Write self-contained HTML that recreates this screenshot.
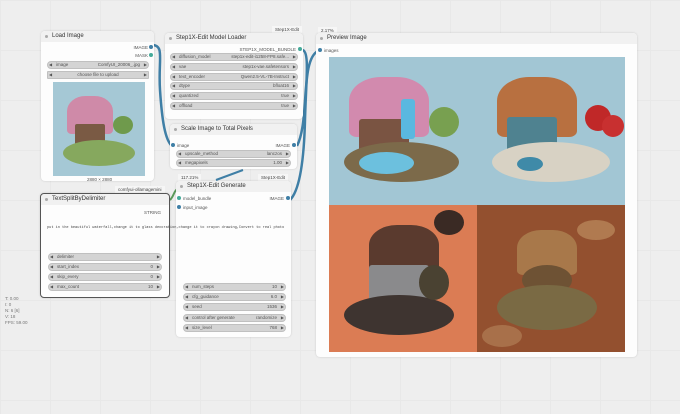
<!DOCTYPE html>
<html><head><meta charset="utf-8"><style>
*{margin:0;padding:0;box-sizing:border-box}
body{width:680px;height:414px;overflow:hidden;background:#eeeeee;font-family:"Liberation Sans",sans-serif;position:relative;
background-image:linear-gradient(#e8e8e8 1px,transparent 1px),linear-gradient(90deg,#e8e8e8 1px,transparent 1px);background-size:50px 50px}
.n{position:absolute;background:#fdfdfd;border-radius:4px;box-shadow:0 0 2px rgba(0,0,0,.15)}
.t{height:11px;background:#f1f1f1;border-radius:4px 4px 0 0;font-size:6px;line-height:11px;padding-left:11px;color:#333;position:relative}
.t:before{content:"";position:absolute;left:4px;top:4px;width:3px;height:3px;border-radius:50%;background:#aaa}
.w{position:absolute;height:8px;background:#d4d4d4;border:1px solid #c0c0c0;border-radius:4px;font-size:4.5px;line-height:6px;color:#555;padding:0 8px 0 8px;display:flex;justify-content:space-between}
.w:before{content:"◀";position:absolute;left:1px;font-size:4px}
.w:after{content:"▶";position:absolute;right:1px;font-size:4px}
.s{position:absolute;font-size:4.5px;color:#555}
.d{position:absolute;width:4px;height:4px;border-radius:50%}
.lb{position:absolute;font-size:4.5px;color:#444;background:#f6f6f6;padding:1px 3px}
.img{position:absolute;overflow:hidden}
.img i{position:absolute;border-radius:50%}
</style></head><body>
<svg style="position:absolute;left:0;top:0" width="680" height="414">
<path d="M152 45 C165 45,158 60,160 90 S165 140,172 146" stroke="#3f7fa6" stroke-width="2.5" fill="none"/>
<path d="M302 50 C310 50,306 80,305 120 S300 190,290 200" stroke="#3f7fa6" stroke-width="2.5" fill="none"/>
<path d="M297 146 C310 120,300 60,318 51" stroke="#3f7fa6" stroke-width="2.5" fill="none"/>
<path d="M170 200 C175 195,173 190,180 188" stroke="#5a9a5a" stroke-width="2" fill="none"/>
<path d="M216 180 L243 170" stroke="#3f7fa6" stroke-width="2" fill="none"/>
</svg>
<div class="lb" style="left:272px;top:26px">Step1X-Edit</div>
<div class="lb" style="left:318px;top:27px">2.17%</div>
<div class="lb" style="left:115px;top:186px">comfyui-ollamagemini</div>
<div class="lb" style="left:178px;top:174px">117.21%</div>
<div class="lb" style="left:258px;top:174px">Step1X-Edit</div>

<div class="n" style="left:41px;top:31px;width:113px;height:150px">
<div class="t">Load Image</div>
<div class="s" style="right:6px;top:14px">IMAGE</div><div class="d" style="right:1px;top:14px;background:#3f7fa6"></div>
<div class="s" style="right:6px;top:22px">MASK</div><div class="d" style="right:1px;top:22px;background:#4a9"></div>
<div class="w" style="left:6px;top:30px;width:102px"><span>image</span><span>ComfyUI_20006_.jpg</span></div>
<div class="w" style="left:6px;top:40px;width:102px;justify-content:center;border-radius:1px">choose file to upload</div>
<div class="img" style="left:12px;top:51px;width:92px;height:94px;background:#a5c8d5">
<i style="left:14px;top:14px;width:46px;height:38px;border-radius:40% 40% 10% 10%;background:#cf8aa8"></i>
<i style="left:22px;top:42px;width:30px;height:22px;border-radius:2px;background:#7a5a44"></i>
<i style="left:10px;top:58px;width:72px;height:26px;background:#86a85e"></i>
<i style="left:60px;top:34px;width:20px;height:18px;background:#6f9a4c"></i>
</div>
<div class="s" style="left:46px;top:146px">2880 × 2880</div>
</div>

<div class="n" style="left:165px;top:33px;width:138px;height:86px">
<div class="t">Step1X-Edit Model Loader</div>
<div class="s" style="right:7px;top:14px">STEP1X_MODEL_BUNDLE</div><div class="d" style="right:1px;top:14px;background:#4a9"></div>
<div class="w" style="left:5px;top:20px;width:128px"><span>diffusion_model</span><span>step1x-edit-i1258-FP8.safe...</span></div>
<div class="w" style="left:5px;top:30px;width:128px"><span>vae</span><span>step1x-vae.safetensors</span></div>
<div class="w" style="left:5px;top:40px;width:128px"><span>text_encoder</span><span>Qwen2.5-VL-7B-Instruct</span></div>
<div class="w" style="left:5px;top:49px;width:128px"><span>dtype</span><span>bfloat16</span></div>
<div class="w" style="left:5px;top:59px;width:128px"><span>quantized</span><span>true</span></div>
<div class="w" style="left:5px;top:69px;width:128px"><span>offload</span><span>true</span></div>
</div>

<div class="n" style="left:170px;top:124px;width:127px;height:45px">
<div class="t">Scale Image to Total Pixels</div>
<div class="d" style="left:1px;top:19px;background:#3f7fa6"></div><div class="s" style="left:7px;top:19px">image</div>
<div class="s" style="right:7px;top:19px">IMAGE</div><div class="d" style="right:1px;top:19px;background:#3f7fa6"></div>
<div class="w" style="left:6px;top:26px;width:115px"><span>upscale_method</span><span>lanczos</span></div>
<div class="w" style="left:6px;top:35px;width:115px"><span>megapixels</span><span>1.00</span></div>
</div>

<div class="n" style="left:40px;top:193px;width:130px;height:105px;border:1px solid #555">
<div class="t">TextSplitByDelimiter</div>
<div class="s" style="right:8px;top:16px">STRING</div>
<div class="w" style="left:7px;top:59px;width:114px"><span>delimiter</span><span></span></div>
<div class="w" style="left:7px;top:69px;width:114px"><span>start_index</span><span>0</span></div>
<div class="w" style="left:7px;top:79px;width:114px"><span>skip_every</span><span>0</span></div>
<div class="w" style="left:7px;top:89px;width:114px"><span>max_count</span><span>10</span></div>
</div>

<div class="n" style="left:176px;top:181px;width:115px;height:156px">
<div class="t">Step1X-Edit Generate</div>
<div class="d" style="left:1px;top:15px;background:#4a9"></div><div class="s" style="left:7px;top:15px">model_bundle</div>
<div class="d" style="left:1px;top:24px;background:#3f7fa6"></div><div class="s" style="left:7px;top:24px">input_image</div>
<div class="s" style="right:7px;top:15px">IMAGE</div><div class="d" style="right:1px;top:15px;background:#3f7fa6"></div>
<div class="w" style="left:7px;top:102px;width:103px"><span>num_steps</span><span>10</span></div>
<div class="w" style="left:7px;top:112px;width:103px"><span>cfg_guidance</span><span>6.0</span></div>
<div class="w" style="left:7px;top:122px;width:103px"><span>seed</span><span>1536</span></div>
<div class="w" style="left:7px;top:133px;width:103px"><span>control after generate</span><span>randomize</span></div>
<div class="w" style="left:7px;top:143px;width:103px"><span>size_level</span><span>768</span></div>
</div>
<div style="position:absolute;left:47px;top:226px;font-family:'Liberation Mono',monospace;font-size:3.6px;color:#444;white-space:nowrap">put in the beautiful waterfall,change it to glass decoration,change it to crayon drawing,Convert to real photo</div>

<div class="n" style="left:316px;top:33px;width:321px;height:324px">
<div class="t">Preview Image</div>
<div class="d" style="left:2px;top:15px;background:#3f7fa6"></div><div class="s" style="left:8px;top:15px">images</div>
<div class="img" style="left:13px;top:24px;width:148px;height:148px;background:#a2c6d4">
<i style="left:20px;top:20px;width:80px;height:60px;border-radius:40% 40% 10% 10%;background:#d28aae"></i>
<i style="left:30px;top:62px;width:50px;height:35px;border-radius:3px;background:#7a5442"></i>
<i style="left:72px;top:42px;width:14px;height:40px;border-radius:3px;background:#5ab8e0"></i>
<i style="left:15px;top:85px;width:115px;height:40px;background:#7c6a4a"></i>
<i style="left:30px;top:95px;width:55px;height:22px;background:#6cc0de"></i>
<i style="left:100px;top:50px;width:30px;height:30px;background:#78a050"></i>
</div>
<div class="img" style="left:161px;top:24px;width:148px;height:148px;background:#a2c6d4">
<i style="left:20px;top:20px;width:80px;height:60px;border-radius:40% 40% 10% 10%;background:#b87040"></i>
<i style="left:30px;top:60px;width:50px;height:35px;border-radius:3px;background:#4f8290"></i>
<i style="left:108px;top:48px;width:26px;height:26px;background:#c02828"></i>
<i style="left:125px;top:58px;width:22px;height:22px;background:#c83030"></i>
<i style="left:15px;top:85px;width:118px;height:40px;background:#d8d2c4"></i>
<i style="left:40px;top:100px;width:26px;height:14px;background:#3f8aa8"></i>
</div>
<div class="img" style="left:13px;top:172px;width:148px;height:147px;background:#db7c54">
<i style="left:40px;top:20px;width:70px;height:50px;border-radius:40% 40% 5% 5%;background:#5a3a2e"></i>
<i style="left:40px;top:60px;width:60px;height:45px;border-radius:3px;background:#8a8a8c"></i>
<i style="left:15px;top:90px;width:110px;height:40px;background:#3e3430"></i>
<i style="left:105px;top:5px;width:30px;height:25px;background:#3a2a24"></i>
<i style="left:90px;top:60px;width:30px;height:35px;background:#4a4232"></i>
</div>
<div class="img" style="left:161px;top:172px;width:148px;height:147px;background:#93502f">
<i style="left:40px;top:25px;width:60px;height:45px;border-radius:40% 40% 10% 10%;background:#a8784a"></i>
<i style="left:45px;top:60px;width:50px;height:30px;background:#6e5234"></i>
<i style="left:20px;top:80px;width:100px;height:45px;background:#7a6a44"></i>
<i style="left:100px;top:15px;width:38px;height:20px;background:#b07a50"></i>
<i style="left:5px;top:120px;width:40px;height:22px;background:#a8704a"></i>
</div>
</div>

<div class="s" style="left:5px;top:296px;line-height:6px;color:#777">T: 0.00<br>I: 0<br>N: 6 [6]<br>V: 18<br>FPS: 59.00</div>
</body></html>
